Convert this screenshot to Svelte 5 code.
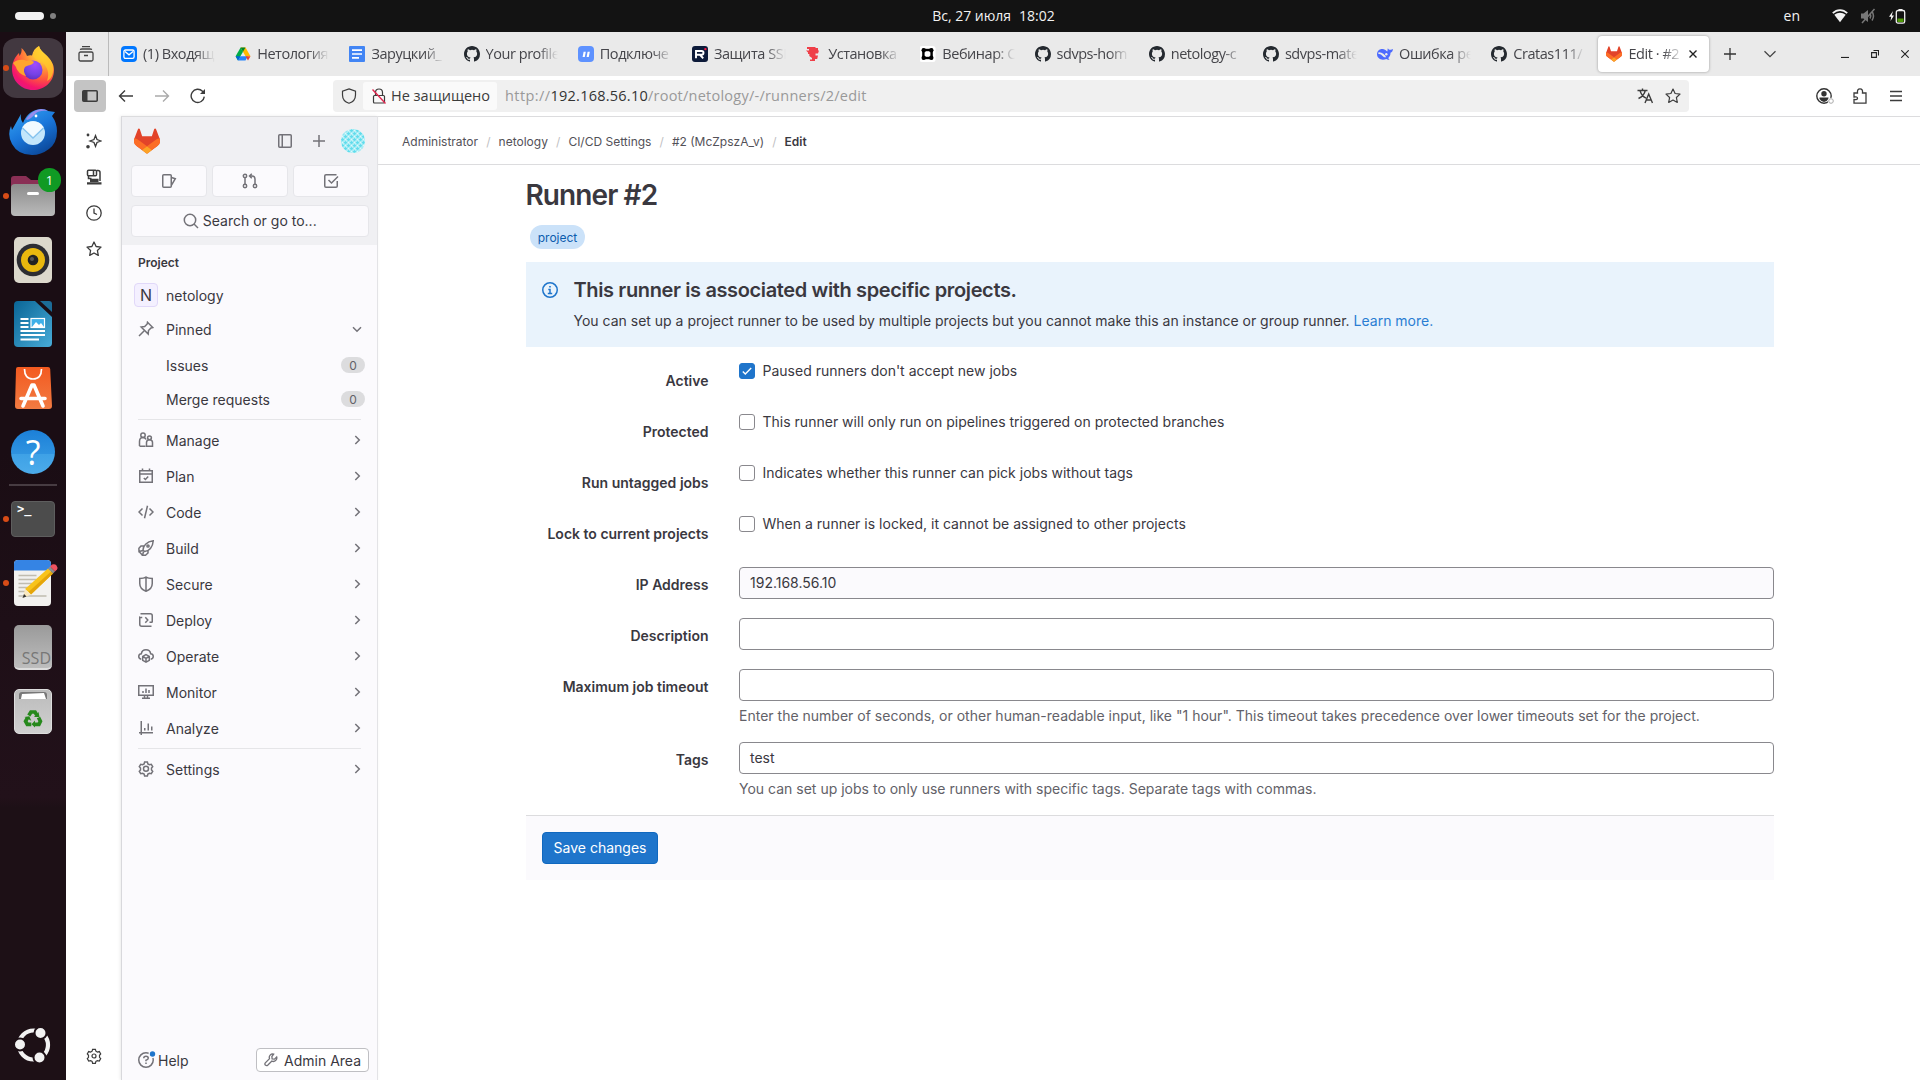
<script>
  const gh = '<path fill="#24292f" fill-rule="evenodd" d="M8 0C3.58 0 0 3.58 0 8c0 3.54 2.29 6.53 5.47 7.59.4.07.55-.17.55-.38 0-.19-.01-.82-.01-1.49-2.01.37-2.53-.49-2.69-.94-.09-.23-.48-.94-.82-1.13-.28-.15-.68-.52-.01-.53.63-.01 1.08.58 1.23.82.72 1.21 1.87.87 2.33.66.07-.52.28-.87.51-1.07-1.78-.2-3.64-.89-3.64-3.95 0-.87.31-1.59.82-2.15-.08-.2-.36-1.02.08-2.12 0 0 .67-.21 2.2.82a7.6 7.6 0 0 1 4 0c1.53-1.04 2.2-.82 2.2-.82.44 1.1.16 1.92.08 2.12.51.56.82 1.27.82 2.15 0 3.07-1.87 3.75-3.65 3.95.29.25.54.73.54 1.48 0 1.07-.01 1.93-.01 2.2 0 .21.15.46.55.38A8.01 8.01 0 0 0 16 8c0-4.42-3.58-8-8-8z"/>';
  const tanuki = '<path fill="#e24329" d="M15.73 6.35l-.02-.06L13.53.6a.57.57 0 0 0-1.08.04l-1.47 4.5H5.02L3.55.64A.57.57 0 0 0 2.47.6L.29 6.29l-.02.06a4.04 4.04 0 0 0 1.34 4.67L8 15.8l6.39-4.78a4.04 4.04 0 0 0 1.34-4.67z"/><path fill="#fc6d26" d="M15.73 6.35a7.3 7.3 0 0 0-2.92 1.31L8 11.3l3.06 2.31 3.33-2.5a4.04 4.04 0 0 0 1.34-4.76zM.27 6.35a7.3 7.3 0 0 1 2.92 1.31L8 11.3l-3.06 2.31-3.33-2.5A4.04 4.04 0 0 1 .27 6.35z"/><path fill="#fca326" d="M4.94 13.61L7.4 15.5a1 1 0 0 0 1.2 0l2.46-1.89L8 11.3z"/>';

  const tabs = [
    { t: '(1) Входящ', i: '<rect width="16" height="16" rx="4" fill="#07f"/><rect x="2.9" y="4" width="10.2" height="8.4" rx="1.6" fill="none" stroke="#fff" stroke-width="1.3"/><path d="M4 5.5l4 3.3 4-3.3" fill="none" stroke="#fff" stroke-width="1.3"/>' },
    { t: 'Нетология', i: '<path fill="#ffba00" d="M5.6 1.5h4.9l5 8.7h-5z"/><path fill="#00ac47" d="M5.6 1.5L8 5.8 3 14.5.6 10.2z"/><path fill="#2684fc" d="M5.4 10.2h7.4l-2.3 4.3H3z"/><path fill="#00832d" d="M5.6 1.5h4.9L8 5.8z"/><path fill="#0066da" d="M.6 10.2h4.8L3 14.5z"/><path fill="#ea4335" d="M10.6 10.2h4.9L13 14.5z"/>' },
    { t: 'Заруцкий_', i: '<rect width="16" height="16" rx="1" fill="#4285f4"/><path d="M3 4.2h10M3 8h10M3 11.8h7" stroke="#fff" stroke-width="1.7"/>' },
    { t: 'Your profile', i: gh },
    { t: 'Подключе', i: '<rect width="16" height="16" rx="4" fill="#5e92ff"/><path d="M4.6 11l1-5.2h2.2l-1 5.2zM8.6 11l1-5.2h2.2l-1 5.2z" fill="#fff"/>' },
    { t: 'Защита SSI', i: '<rect width="16" height="16" rx="3" fill="#0d1b3a"/><path d="M4 12.3V5h5.6q1.9 0 1.9 1.8 0 2-1.9 2H4M8.2 9l3 3.3" fill="none" stroke="#fff" stroke-width="1.9"/><circle cx="13.4" cy="3.1" r="1.2" fill="#ff1744"/>' },
    { t: 'Установка', i: '<path fill="#ef3f48" d="M1 1h8.5v1H12v2.5h1l-1 3H9.5v2H12l-.8 3.5H9V15H4v-1.500h2V12L3.300 10V8H2V6.500L0 4.500h3V3H1z"/>' },
    { t: 'Вебинар: С', i: '<rect x="-.5" y="0" width="16" height="16" rx="2.5" fill="#fff"/><rect x="3.4" y="4" width="8.2" height="8" fill="none" stroke="#000" stroke-width="2.4"/><g fill="#000"><circle cx="3.7" cy="4.3" r="2.2"/><circle cx="11.3" cy="4.3" r="2.2"/><circle cx="3.7" cy="11.7" r="2.2"/><circle cx="11.3" cy="11.7" r="2.2"/></g>' },
    { t: 'sdvps-hom', i: gh },
    { t: 'netology-c', i: gh },
    { t: 'sdvps-mate', i: gh },
    { t: 'Ошибка ре', i: '<path fill="#4d6bfe" d="M0 8.3C0 5 2.700 2.600 6 3.100c2.200.3 3 1.700 4.200 2.500.6-1.300.2-2.400.7-3.400.6 1.200 1.600 1.700 2.600 1.600.9-.1 1.600-.7 2.500-.9-.1 2-1.100 3.300-2.500 3.900.1 2-.8 3.900-2.400 5.400.5.500 1.100.6 1.400 1.200-1.300.6-2.300.1-3.100-.4C4.300 15.100 0 12.300 0 8.300z"/><path fill="#ebebeb" d="M1.500 6.200c3.300-.4 6.200 2 7.700 5-1.600.5-2.700-.3-3.600-1.300C4.300 8.300 3 7.600 1.300 8z"/><circle cx="9.3" cy="8.3" r="1.2" fill="#ebebeb"/>' },
    { t: 'Cratas111/', i: gh },
    { t: 'Edit · #2', i: tanuki, active: true }
  ];

  const chevR = '<path d="M6.3 4l4 4-4 4"/>';
  const nav = [
    { t: 'Manage', i: '<circle cx="5" cy="3.2" r="2.2"/><path d="M1.500 14V9.500C1.500 7 3 5.500 5 5.500c1.400 0 2.600.8 3.100 2M1.500 14.250H7.500"/><circle cx="11.5" cy="5.8" r="1.9"/><path d="M8.500 14.250V10.500c0-1.700 1.200-2.800 3-2.800s3 1.100 3 2.800v3.750z"/>' },
    { t: 'Plan', i: '<rect x="1.75" y="2.75" width="12.5" height="11.5"/><path d="M1.750 6h12.500M4.500 .5v2.500M11.500 .5v2.500M5.800 10l1.600 1.500 2.800-3"/>' },
    { t: 'Code', i: '<path d="M4.500 4.500L1 8l3.500 3.500M11.500 4.500L15 8l-3.500 3.500M9.500 1.800l-3 12.400"/>' },
    { t: 'Build', i: '<path d="M5 10c0-4 3.500-8.500 10.250-9.250C14.900 7 11 11.300 6.500 11.500zM5.800 6H3L.9 8.300 1 11.500l4-1M10 10.500V13l-2.500 2.250H4.500l1-3.500M1 11.500l3.500 3.700"/><circle cx="10" cy="6" r="1.1"/>' },
    { t: 'Secure', i: '<path d="M1.750 2.500C4 2.500 6.500 2 8 1c1.500 1 4 1.500 6.250 1.500V7.500c0 3.500-3 6.500-6.250 7.750C4.750 14 1.750 11 1.750 7.500zM8 1v14"/>' },
    { t: 'Deploy', i: '<path d="M2.500 1.750h9.750a2 2 0 0 1 2 2V10.500M14.250 10.250H11.500M1 5h.75M13.500 14.250H3.750a2 2 0 0 1-2-2V5.500h2.500M7.300 5.300L9.800 8l-2.500 2.700"/>' },
    { t: 'Operate', i: '<path d="M3.300 11.250C1.700 11 .75 9.900.75 8.500c0-1.500 1.100-2.700 2.600-2.750C3.700 3.200 5.500 1.750 8 1.750s4.300 1.450 4.650 4c1.500.05 2.600 1.250 2.600 2.750 0 1.400-.95 2.500-2.550 2.750"/><path d="M8 6.600l3.300 1.800v3.900L8 14.200l-3.300-1.900V8.400zM4.800 8.500L8 10.300l3.200-1.800M8 10.300v3.700"/>' },
    { t: 'Monitor', i: '<rect x=".75" y="1.75" width="14.5" height="9.5"/><path d="M6.500 11.250v3M9.500 11.250v3M4 14.250h8M5 7v2M8 4.500V9M11 6v3"/>' },
    { t: 'Analyze', i: '<path d="M3.250 1v14M1 12.750h14M6.750 8v2.500M10.250 3.500v7M13.750 6.500v4"/>' }
  ];
  const gear = '<path d="M6.600 1h2.800l.5 1.900 1.500.85 1.900-.5 1.400 2.400-1.200 1.300v2.100l1.200 1.300-1.400 2.400-1.900-.5-1.500.85-.5 1.900H6.600l-.5-1.900-1.500-.85-1.900.5-1.400-2.400 1.200-1.300V6.950L1.300 5.650l1.400-2.400 1.900.5 1.500-.85z"/>';

  const crumbs = ['Administrator', 'netology', 'CI/CD Settings', '#2 (McZpszA_v)'];
  const checks = [
    { l: 'Active', t: "Paused runners don't accept new jobs", on: true },
    { l: 'Protected', t: 'This runner will only run on pipelines triggered on protected branches' },
    { l: 'Run untagged jobs', t: 'Indicates whether this runner can pick jobs without tags' },
    { l: 'Lock to current projects', t: 'When a runner is locked, it cannot be assigned to other projects' }
  ];
  const fields = [
    { l: 'IP Address', v: '192.168.56.10', ro: true },
    { l: 'Description', v: '' },
    { l: 'Maximum job timeout', v: '', h: 'Enter the number of seconds, or other human-readable input, like "1 hour". This timeout takes precedence over lower timeouts set for the project.' },
    { l: 'Tags', v: 'test', h: 'You can set up jobs to only use runners with specific tags. Separate tags with commas.' }
  ];

  // identicon-like lattice inside the user's avatar
  const dots = [];
  for (let y = 0; y < 8; y++) for (let x = 0; x < 8; x++) dots.push([x * 3 + 1.5, y * 3 + 1.5, (x + y) % 2]);
</script>

{#snippet icon(body, size = 16, cls = '', sw = 1.5)}
  <svg class={cls} width={size} height={size} viewBox="0 0 16 16" fill="none" stroke="currentColor" stroke-width={sw}>{@html body}</svg>
{/snippet}
{#snippet pic(body, size = 16)}
  <svg width={size} height={size} viewBox="0 0 16 16">{@html body}</svg>
{/snippet}

<div class="screen">
  <header class="topbar">
    <div class="ws"><i class="pill"></i><i class="dot"></i></div>
    <div class="clock"><span>Вс, 27 июля</span><span>18:02</span></div>
    <div class="tray">
      <span>en</span>
      <svg width="16" height="16" viewBox="0 0 16 16"><path d="M.8 5.200C5 1 11 1 15.200 5.200" fill="none" stroke="#f2f2f2" stroke-width="1.800"/><path d="M2.300 6.700c3.400-2.700 8-2.700 11.400 0L8 14.200z" fill="#f2f2f2"/></svg>
      <svg width="16" height="16" viewBox="0 0 16 16" fill="none" stroke="#777" stroke-width="1.500"><path d="M1 5.500h2.500L8 2v12l-4.500-3.500H1z" fill="#777" stroke="none"/><path d="M10 5.500q1.500 2.500 0 5M12 3.500q3 4.500 0 9M14.500 1L2 15"/></svg>
      <svg width="18" height="16" viewBox="0 0 18 16"><path d="M5 3L1 8.700h2.200L2.500 13 6 7.500H3.800z" fill="#f2f2f2"/><rect x="8.300" y="2.500" width="8.400" height="12.600" rx="1.700" fill="none" stroke="#f2f2f2" stroke-width="1.300"/><path d="M10.500 1h4v1.500h-4z" fill="#f2f2f2"/><path d="M9.500 10.500h6v3.500h-6z" fill="#4e9a06"/></svg>
    </div>
  </header>

  <div class="desk">
    <nav class="dock">
      <div class="app sel run"><svg width="44" height="44" viewBox="0 0 44 44">
        <defs>
          <radialGradient id="ff" cx=".75" cy=".12" r="1"><stop offset="0" stop-color="#fff44f"/><stop offset=".35" stop-color="#ffa436"/><stop offset=".62" stop-color="#ff5a3c"/><stop offset=".85" stop-color="#f5156c"/><stop offset="1" stop-color="#e31587"/></radialGradient>
          <radialGradient id="fg" cx=".6" cy=".2" r=".9"><stop offset="0" stop-color="#a04bff"/><stop offset=".6" stop-color="#7542e5"/><stop offset="1" stop-color="#5b2bb8"/></radialGradient>
        </defs>
        <path fill="url(#ff)" d="M28 0c1 4 4 6 7 9 5 5 8 9 8 15 0 12-9.500 20-21 20S1 35 1 23C1 16 4 11 8 7l.5 3C10 8 11 5 10.500 2 13 4 15 7 16 10q3-1 5-.5C22 5 24 2 28 0z"/>
        <path fill="#ffc928" d="M28 0c1 4 4 6 7 9 5 5 8 9 7 17-1 6-4 8-6 9 3-8 0-14-4-18-4-3-9-4-10-7C22 6 24 3 28 0z" opacity=".75"/>
        <circle cx="22" cy="24" r="9.500" fill="url(#fg)"/>
        <path fill="#ffa52e" d="M2 17c4-4 10-4 14-2 3-1 6 0 7 1-2 4-7 3-9 5-2 3-1 6 1 9-5-1-9-5-10-9z"/></svg></div>
      <div class="app"><svg width="48" height="48" viewBox="0 0 48 48">
        <defs><linearGradient id="tb" x1="0" y1="0" x2=".6" y2="1"><stop offset="0" stop-color="#39a9f5"/><stop offset=".55" stop-color="#1a77db"/><stop offset="1" stop-color="#0c4b9e"/></linearGradient></defs>
        <path fill="url(#tb)" d="M12 6q-1 6 2 9Q19 2 32 1q5 0 7 2l7 1-3 4q5 7 5 15 0 12-8 18-8 6-17 6Q9 47 3 36-2 27 2 18l1 4Q7 15 12 6z"/>
        <path fill="#b08cf0" d="M17 11Q23 2 32 1q4 0 7 2-9-1-13 3-4 5-8 6z" opacity=".8"/>
        <circle cx="24" cy="25" r="12" fill="#c3e6fb"/><path d="M13.500 19.500L24 29.500 34.500 19.500a12 12 0 0 0-21 0z" fill="#f1faff"/><path d="M13.500 20L24 30l10.500-10" fill="none" stroke="#86c3ee" stroke-width="1.300"/><circle cx="27" cy="8" r="1.400" fill="#fff"/></svg></div>
      <div class="app run"><svg width="48" height="44" viewBox="0 0 48 44"><path fill="#8a2f55" d="M2 5q0-3 3-3h12l5 4h18q4 0 4 4v6H2z"/><defs><linearGradient id="gr" x1="0" y1="0" x2="0" y2="1"><stop offset="0" stop-color="#8c8c8c"/><stop offset="1" stop-color="#bababa"/></linearGradient></defs><rect x="2" y="10" width="44" height="32" rx="4" fill="url(#gr)"/><rect x="18" y="18" width="12" height="3" rx="1.500" fill="#fff"/></svg><b class="badge">1</b></div>
      <div class="app"><svg width="38" height="46" viewBox="0 0 38 46"><rect width="38" height="46" rx="5" fill="#dcd8cc"/><circle cx="19" cy="23" r="16.300" fill="#2d2d33"/><circle cx="19" cy="23" r="12" fill="#e9b80e"/><circle cx="19" cy="23" r="5.300" fill="#222"/><circle cx="18" cy="22" r="2" fill="#555"/></svg></div>
      <div class="app"><svg width="38" height="46" viewBox="0 0 38 46"><defs><linearGradient id="wr" x1="0" y1="0" x2="1" y2="1"><stop offset="0" stop-color="#0a6596"/><stop offset="1" stop-color="#48acd8"/></linearGradient></defs><path fill="url(#wr)" d="M4 0h17l17 16v26q0 4-4 4H4q-4 0-4-4V4q0-4 4-4z"/><path fill="#1c6c97" d="M26 0h9q3 0 3 3v8z"/><g stroke="#fff" stroke-width="2"><path d="M6.500 18h8M6.500 22h8M6.500 26h8M6.500 30H31M6.500 34H31M6.500 38.500H25"/></g><rect x="17" y="17.500" width="13.500" height="9" fill="#3fb0e8" stroke="#fff" stroke-width="1.200"/><path fill="#fff" d="M18 26l4-5 3 3 2-2 3 4z"/></svg></div>
      <div class="app"><svg width="38" height="44" viewBox="0 0 38 44"><defs><linearGradient id="as" x1="0" y1="0" x2="0" y2="1"><stop offset="0" stop-color="#f35a20"/><stop offset="1" stop-color="#f27b42"/></linearGradient></defs><path fill="url(#as)" d="M4 1h30q2 0 2.200 2L38 40q0 3-3 3H4q-3 0-3-3L2 3q0-2 2-2z"/><path d="M10.500 3q0 10 8.500 10t8.500-10" fill="none" stroke="#fff" stroke-width="1.700"/><path d="M9 40L18 19h2l9 21M7 32.500h24" fill="none" stroke="#fff" stroke-width="3.600" stroke-linecap="round" stroke-linejoin="round"/></svg></div>
      <div class="app"><div class="help">?</div></div>
      <hr />
      <div class="app run"><div class="term">&gt;_</div></div>
      <div class="app run"><svg width="46" height="46" viewBox="0 0 46 46" class="wide"><rect x="0" width="37" height="46" rx="4" fill="#f2f1ef"/><path fill="#3584e4" d="M4 0h29q4 0 4 4v6.500H0V4q0-4 4-4z"/><path d="M4.500 15.500h18M4.500 19.500h18M4.500 23.500H18M4.500 27.500H14M4.500 31.500h8M4.500 36h28" stroke="#c0bcb0" stroke-width="1.600"/><path fill="#f8c31c" d="M34 8.500l5 5L17 34.500l-6-5.500z"/><path fill="#e5a50a" d="M37 11.500l2 2L17 34.500 14.500 32z"/><path fill="#f9e8c0" d="M11 29l6 5.500-8 3.500z"/><path fill="#333" d="M10 34l2.500 2.500L8.500 38z"/><path fill="#8d8d8d" d="M34 8.500l2-2 5 5-2 2z"/><path fill="#ee5360" d="M36 6.500l2-2q3-1 4.500 1t.5 4l-2 2z"/></svg></div>
      <div class="app"><div class="ssd">SSD</div></div>
      <div class="app"><div class="trash"><svg width="30" height="8" viewBox="0 0 30 8"><path d="M1 7V3q0-3 3-3h22q3 0 3 3v4" fill="#777"/><path d="M3 7l1-5 22-1 2 6z" fill="#fff"/></svg><svg class="rec" width="20" height="19" viewBox="0 0 20 19"><g fill="none" stroke="#26891c" stroke-width="3.700"><path d="M5.800 6.500L8 3h4l1.800 3.200M15.500 8.500l1.900 3.700-1.500 3.100h-4M8.300 15.300h-4L2.600 12.200l2-3.500"/></g><path fill="#26891c" d="M11 8l5.500 0-1-5zM12 11.500v7l-3.500-3.300zM1.500 8l4.800-.8 2 4.500z"/></svg></div></div>
      <div class="grow"></div>
      <svg class="ubuntu" width="38" height="38" viewBox="0 0 38 38"><circle cx="19.500" cy="19" r="14.500" fill="none" stroke="#f2f2f2" stroke-width="4.200"/><g fill="#f2f2f2" stroke="#1d1016" stroke-width="2"><circle cx="6" cy="18.500" r="6"/><circle cx="26.500" cy="7" r="6"/><circle cx="25.500" cy="31.500" r="6"/></g></svg>
    </nav>

    <section class="browser">
      <div class="tabstrip">
        <div class="fxview">{@render icon('<rect x="1" y="6" width="14" height="9" rx="1.5"/><path d="M2 3.500Q3 3 4 3h8q1 0 2 .5M4 .7h8M6 9.500h4"/>', 16, '', 1.3)}</div>
        <div class="tabs">
          {#each tabs as tab}
            <div class="tab" class:active={tab.active}>
              {@render pic(tab.i)}
              <span class="tt">{tab.t}</span>
              {#if tab.active}<svg width="8" height="8" viewBox="0 0 8 8"><path d="M.5.5l7 7M7.500.5l-7 7" stroke="#222" stroke-width="1.400"/></svg>{/if}
            </div>
          {/each}
        </div>
        <svg class="newtab" width="12" height="12" viewBox="0 0 12 12"><path d="M6 0v12M0 6h12" stroke="#333" stroke-width="1.300"/></svg>
        <svg class="alltabs" width="12" height="8" viewBox="0 0 12 8"><path d="M.5 1.200L6 6.700l5.500-5.500" fill="none" stroke="#444" stroke-width="1.300"/></svg>
        <div class="grow"></div>
        <div class="wm">
          <svg width="8" height="8" viewBox="0 0 8 8"><path d="M0 7.500h8" stroke="#222" stroke-width="1.200"/></svg>
          <svg width="8" height="8" viewBox="0 0 8 8"><path d="M.6 2.600h4.800v4.800H.6zM2.500.5h5v5" fill="none" stroke="#222" stroke-width="1.100"/></svg>
          <svg width="8" height="8" viewBox="0 0 8 8"><path d="M.3.300l7.400 7.400M7.700.3L.3 7.700" stroke="#222" stroke-width="1.100"/></svg>
        </div>
      </div>

      <div class="toolbar">
        <div class="sb">{@render icon('<rect x=".8" y="2.8" width="14.4" height="10.4" rx="1"/><path fill="currentColor" stroke="none" d="M1 3h4.500v10H1z"/>', 16, '', 1.6)}</div>
        <div class="navi">
          {@render icon('<path d="M15 8H1.500M7 2.500L1.500 8 7 13.500"/>', 16, '', 1.4)}
          {@render icon('<path d="M1 8h13.500M9 2.500L14.500 8 9 13.500"/>', 16, 'dis', 1.4)}
          {@render icon('<path d="M14.300 8.700A6.600 6.600 0 1 1 12.500 3.300L14 5"/><path d="M15 1v5h-5z" fill="currentColor" stroke="none"/>', 16, '', 1.4)}
        </div>
        <div class="urlbar">
          <div class="shield">{@render icon('<path d="M8 .9l6.500 2.300V7c0 4-2.500 7-6.500 8.300C4 14 1.500 11 1.500 7V3.200z"/>', 16, '', 1.2)}</div>
          <div class="insecure">
            {@render icon('<rect x="2.5" y="7.5" width="11" height="7.5" rx="1"/><path d="M4.500 7.500V4.500a3.500 3.500 0 0 1 7 0v3"/><path d="M1.500 1.500l13 14" stroke="#e22850" stroke-width="1.4"/>', 16, '', 1.2)}
            <span>Не защищено</span>
          </div>
          <div class="url"><span class="u1">http://</span><span class="u2">192.168.56.10</span><span class="u3">/root/netology/-/runners/2/edit</span></div>
          <div class="uricons">
            {@render icon('<path d="M.5 2.500h10M5.500.5v2M3 2.500Q4.500 8 9 10.200M8.300 2.500Q7 8 1.500 10.500M8 15l3.700-9L15.500 15M9.300 12h5"/>', 16, '', 1.4)}
            {@render icon('<path d="M8 1l2.100 4.500 4.900.6-3.600 3.400.9 4.900L8 12l-4.300 2.400.9-4.900L1 6.100l4.900-.6z" stroke-linejoin="round"/>', 16, '', 1.2)}
          </div>
        </div>
        <div class="grow"></div>
        <div class="tools">
          <svg class="acct" width="18" height="17" viewBox="0 0 18 17"><circle cx="8" cy="8" r="7.200" fill="none" stroke="#333" stroke-width="1.400"/><circle cx="8" cy="5.800" r="2.700" fill="#333"/><path d="M3.500 9.500h9V11q-2 3-4.500 3T3.500 11z" fill="#333"/><circle cx="15" cy="13" r="3.300" fill="#fff"/><circle cx="15" cy="13" r="2.300" fill="#fff" stroke="#aaa" stroke-width="1"/></svg>
          {@render icon('<path d="M2 15.200V11.500q3.500.5 3.500-1.300T2 9V5h3.500Q5 .8 8 .8T10.500 5H14v10.200z"/>', 16, '', 1.3)}
          {@render icon('<path d="M2 3.500h12M2 8h12M2 12.500h12"/>', 16, '', 1.3)}
        </div>
      </div>

      <div class="viewport">
        <aside class="fxside">
          {@render icon('<path d="M9.500 2.500l1.500 4 4 1.500-4 1.500-1.500 4L8 9.500 4 8l4-1.500z"/><circle cx="2" cy="2" r="1.4" fill="currentColor" stroke="none"/><circle cx="2" cy="13.7" r="1.8" fill="currentColor" stroke="none"/>', 16, '', 1.3)}
          {@render icon('<rect x="1.500" y="1.2" width="9" height="5.600" rx="1"/><path d="M7.500 1.500v5M11 1.500h1q2 0 2 2v8.500M2.500 7v2.500h3M4 10.500h8.500"/><path d="M1 14.400h14.500M4 11.800h8.500" stroke-width="2.200"/>', 16, '', 1.5)}
          {@render icon('<circle cx="8" cy="8" r="7.2"/><path d="M8 3.500V8l3 1.500"/>', 16, '', 1.3)}
          {@render icon('<path d="M8 1l2.100 4.500 4.900.6-3.600 3.400.9 4.900L8 12l-4.300 2.400.9-4.900L1 6.100l4.900-.6z" stroke-linejoin="round"/>', 16, '', 1.3)}
          <div class="grow"></div>
          {@render icon('<g transform="translate(0 .300)">' + gear + '<circle cx="8" cy="7.700" r="2"/></g>', 16, '', 1.2)}
        </aside>

        <aside class="gl">
          <div class="glhead">
            <div class="brand">
              {@render pic(tanuki, 26)}
              <div class="grow"></div>
              {@render icon('<rect x="1.75" y="1.75" width="12.5" height="12.5" rx="1"/><path d="M5.250 2v12"/>')}
              {@render icon('<path d="M8 2v12M2 8h12"/>')}
              <svg class="ava" width="24" height="24" viewBox="0 0 24 24"><rect width="24" height="24" fill="#dff8fb"/>{#each dots as [x, y, k]}{#if k}<circle cx={x} cy={y} r="1.500" fill="#5fdcec" />{:else}<rect x={x - 0.9} y={y - 0.9} width="1.800" height="1.800" fill="none" stroke="#8be6f1" stroke-width=".6" />{/if}{/each}</svg>
            </div>
            <div class="trio">
              <div class="tile">{@render icon('<rect x="1.75" y="1.75" width="8.5" height="12.5" rx="1"/><path d="M10.500 4.500l3.800 1.200-3.800 6.500"/>')}</div>
              <div class="tile">{@render icon('<circle cx="3" cy="2.9" r="1.7"/><circle cx="3" cy="13" r="1.7"/><circle cx="13" cy="13" r="1.7"/><path d="M3 4.800v6.400M13 11.200V6q0-3-3-3H7.500M9.800.7L7.500 3l2.300 2.300"/>')}</div>
              <div class="tile">{@render icon('<path d="M13.500 1.750H3q-1.250 0-1.250 1.250v10q0 1.250 1.250 1.250h10q1.250 0 1.250-1.250V8M5.500 7l3 3L15 3.500"/>')}</div>
            </div>
            <div class="tile search">{@render icon('<circle cx="7" cy="7" r="5.7"/><path d="M11 11l4 4"/>')}<span>Search or go to...</span></div>
          </div>
          <div class="glnav">
            <div class="cap"><span>Project</span></div>
            <div class="row ctx"><div class="n">N</div><span>netology</span></div>
            <div class="row">{@render icon('<path d="M9.500 1.200l5.300 5.300-1.800.5-2.500 2.500-.3 3.500-7-7L6.700 5.500 9.200 3zM6 10L1 15"/>')}<span class="txt">Pinned</span>{@render icon('<path d="M4 6.300l4 4 4-4"/>')}</div>
            <div class="row sub first"><span class="txt">Issues</span><span class="cnt">0</span></div>
            <div class="row sub"><span class="txt">Merge requests</span><span class="cnt">0</span></div>
            <hr class="upper" />
            {#each nav as n}
              <div class="row big">{@render icon(n.i)}<span class="txt">{n.t}</span>{@render icon(chevR)}</div>
            {/each}
            <hr />
            <div class="row big">{@render icon(gear + '<circle cx="8" cy="7.7" r="2.5"/>')}<span class="txt">Settings</span>{@render icon(chevR)}</div>
          </div>
          <div class="glfoot">
            {@render icon('<circle cx="8" cy="8" r="7.25"/><path d="M5.750 6.300q0-2 2.250-2t2.250 1.900Q10.250 7.500 8 8.300V9.300M8 10.500V12"/><circle cx="14.500" cy="2" r="4" fill="#fbfafd" stroke="none"/><circle cx="14.500" cy="2" r="2.700" fill="#1f75cb" stroke="none"/>', 16, 'notify')}
            <span>Help</span>
            <div class="grow"></div>
            <div class="admin">{@render icon('<path d="M11 1.200a4 4 0 0 0-4.700 5.300L1.500 11.300q-1 1.200 0 2.500 1.500 1.200 2.700.2l4.800-4.700a4 4 0 0 0 5.500-4.800L12 7 9.300 6.700 9 4z"/>', 14)}<span>Admin Area</span></div>
          </div>
        </aside>

        <main>
          <div class="crumbs">
            {#each crumbs as c}<span>{c}</span><span class="sl">/</span>{/each}<span class="cur">Edit</span>
          </div>
          <div class="content">
            <h1>Runner #2</h1>
            <span class="pb">project</span>
            <div class="alert">
              {@render icon('<circle cx="8" cy="8" r="7.25"/><path d="M6.300 7.500H8v3.750M5.800 11.500h4.400M7.200 4.750h1.600"/>')}
              <div>
                <h2>This runner is associated with specific projects.</h2>
                <p>You can set up a project runner to be used by multiple projects but you cannot make this an instance or group runner. <a href="#learn">Learn more.</a></p>
              </div>
            </div>
            {#each checks as c}
              <div class="fr">
                <div class="lb">{c.l}</div>
                <div class="ck"><i class:on={c.on}>{#if c.on}<svg width="10" height="10" viewBox="0 0 10 10"><path d="M.8 5.500L3.300 8 9.200 2" fill="none" stroke="#fff" stroke-width="1.400"/></svg>{/if}</i><span>{c.t}</span></div>
              </div>
            {/each}
            {#each fields as f}
              <div class="fr">
                <div class="lb">{f.l}</div>
                <div class="fc">
                  <div class="inp" class:ro={f.ro}><span>{f.v}</span></div>
                  {#if f.h}<span class="hint">{f.h}</span>{/if}
                </div>
              </div>
            {/each}
            <div class="actions"><button>Save changes</button></div>
          </div>
        </main>
      </div>
    </section>
  </div>
</div>

<style>
  :global(body) { margin: 0; overflow: hidden; }
  * { box-sizing: border-box; }
  svg { display: block; flex: none; }
  .notify { overflow: visible; }
  i { font-style: normal; }
  .grow { flex: 1; }
  .screen { width: 1920px; height: 1080px; display: flex; flex-direction: column; background: #fff; font-family: "Open Sans", "Noto Sans", sans-serif; }

  .topbar { height: 32px; background: #131313; color: #f2f2f2; display: grid; grid-template-columns: 1fr auto 1fr; align-items: center; font-size: 14px; }
  .ws { display: flex; align-items: center; gap: 6px; padding-left: 15px; }
  .pill { width: 29px; height: 8px; border-radius: 4px; background: #f2f2f2; }
  .dot { width: 6px; height: 6px; border-radius: 50%; background: #808080; }
  .clock { display: flex; gap: 8px; padding: 0 0 2px 67px; }
  .tray { display: flex; justify-content: flex-end; align-items: center; gap: 12px; padding-right: 14px; }
  .tray span { margin-right: 20px; padding-bottom: 2px; }

  .desk { flex: 1; display: flex; min-height: 0; }
  .dock { width: 66px; padding-top: 4px; display: flex; flex-direction: column; align-items: center; background: linear-gradient(#1a0d14 0, #1a0d14 40%, #22111a 73%, #1d1016 74%, #1d1016 100%); }
  .dock hr { width: 48px; height: 2px; margin: 0 0 1px; border: 0; background: #473c42; }
  .app { position: relative; width: 60px; height: 64px; display: flex; align-items: center; justify-content: center; }
  .sel { background: #423840; background-clip: content-box; padding: 2px 0; border-radius: 14px; }
  .run::before { content: ''; position: absolute; left: 0; top: 29px; width: 6px; height: 6px; border-radius: 50%; background: #d84c17; }
  .badge { position: absolute; left: 35px; top: 4px; width: 23px; height: 24px; border-radius: 12px; background: #109a24; color: #fff; font-size: 13px; line-height: 24px; text-align: center; font-weight: 400; }
  .help { width: 44px; height: 44px; border-radius: 50%; background: linear-gradient(#1c80d8, #2f93e0 54%, #3ea1e6 55%, #4cabea); color: #fff; font: 34px/44px "Open Sans", sans-serif; text-align: center; }
  .term { width: 44px; height: 36px; border-radius: 4px; background: #4c4c4c; border: 1px solid #5e5e5e; color: #fff; font: bold 12px/15px "DejaVu Sans Mono", monospace; padding-left: 5px; }
  .wide { margin-left: 8px; }
  .ssd { width: 38px; height: 45px; border-radius: 5px; background: linear-gradient(#9a9a9a, #bdbdbd); border-bottom: 2px solid #ddd; color: #777; font-size: 16px; line-height: 67px; text-align: right; padding-right: 1px; overflow: hidden; }
  .trash { width: 38px; height: 45px; border-radius: 5px; background: linear-gradient(#bbb, #d0d0d0); border: 1px solid #ddd; display: flex; flex-direction: column; align-items: center; gap: 9px; padding-top: 2px; }
  .ubuntu { margin-bottom: 16px; }

  .browser { flex: 1; display: flex; flex-direction: column; min-width: 0; }
  .tabstrip { height: 44px; background: #eaeaea; display: flex; align-items: center; }
  .fxview { width: 43px; height: 44px; display: flex; align-items: center; padding-left: 12px; border-right: 1px solid #bbb; color: #444; }
  .tabs { display: flex; gap: 4px; padding-left: 4px; }
  .tab { width: 110.2px; height: 36px; display: flex; align-items: center; gap: 6px; padding: 0 8px; border-radius: 4px; color: #45454a; }
  .tt { flex: 1; overflow: hidden; white-space: nowrap; font-size: 14.5px; letter-spacing: -.45px; line-height: 22px; padding-bottom: 1px; mask-image: linear-gradient(90deg, #000 calc(100% - 20px), transparent); }
  .tab.active { background: #fff; box-shadow: 0 0 3px rgba(0, 0, 0, .35); margin-left: 1px; }
  .tab.active svg:last-child { margin-right: 4px; }
  .newtab { margin-left: 15px; }
  .alltabs { margin-left: 28px; }
  .wm { display: flex; gap: 22px; padding-right: 11px; }

  .toolbar { height: 40px; background: #fff; display: flex; align-items: center; padding-left: 8px; color: #3c3c3c; }
  .sb { width: 32px; height: 32px; border-radius: 4px; background: #c4c4c4; display: flex; align-items: center; justify-content: center; }
  .navi { display: flex; gap: 20px; padding-left: 12px; width: 227px; }
  .toolbar :global(.dis) { color: #aaa; }
  .urlbar { width: 1356px; height: 32px; border-radius: 4px; background: #f0f0f0; display: flex; align-items: center; font-size: 14.5px; }
  .shield { padding-left: 8px; width: 30px; }
  .insecure { height: 28px; width: 134px; display: flex; align-items: center; gap: 4px; padding-left: 8px; background: #fafafa; border-radius: 3px; white-space: nowrap; }
  .insecure span { padding-bottom: 2px; }
  .url { flex: 1; padding: 0 0 2px 8px; color: #999; white-space: nowrap; letter-spacing: .24px; }
  .u1 { letter-spacing: .42px; }
  .u2 { color: #333; }
  .uricons { display: flex; gap: 12px; padding-right: 8px; }
  .tools { display: flex; gap: 20px; padding-right: 16px; }
  .acct { margin-right: -2px; }

  .viewport { flex: 1; display: flex; min-height: 0; }
  .fxside { width: 55px; display: flex; flex-direction: column; align-items: center; gap: 20px; padding: 17px 0 16px 1px; color: #3c3c3c; }

  .gl, main { font-family: Inter, sans-serif; font-size: 14px; color: #3a383f; border-top: 1px solid #dcdcde; }
  .gl { width: 257px; display: flex; flex-direction: column; background: #fbfafd; border-left: 1px solid #d8d8dc; border-right: 1px solid #e3e3e6; box-shadow: -1px 0 3px rgba(0, 0, 0, .08); line-height: 20px; }
  .gl svg { color: #737278; }
  .glhead { height: 128px; background: #f0f0f3; padding: 12px 8px 8px 8.5px; display: flex; flex-direction: column; }
  .brand { height: 24px; display: flex; align-items: center; gap: 18px; padding: 0 4px 0 3px; }
  .brand :global(svg:last-child) { margin-left: -4px; }
  .ava { border-radius: 50%; }
  .trio { display: flex; gap: 5px; margin-top: 12px; }
  .tile { flex: 1; height: 32px; display: flex; align-items: center; justify-content: center; gap: 4px; background: #fbfafd; border: 1px solid #e6e6ea; border-radius: 4px; }
  .search { flex: none; margin-top: 8px; }
  .glnav { flex: 1; padding: 8px 8px 0; }
  .cap { padding: 0 8px; margin-bottom: 5px; font-size: 12px; font-weight: 600; line-height: 20px; }
  .row { display: flex; align-items: center; height: 34px; padding: 0 4px 0 8px; }
  .row .txt { flex: 1; padding: 2px 0 0 12px; }
  .ctx { padding: 0 4px; gap: 8px; }
  .ctx span { padding-top: 1px; }
  .n { width: 24px; height: 24px; border-radius: 4px; background: #f4f0ff; border: 1px solid #e1d8f9; font-size: 16px; line-height: 22px; text-align: center; }
  .sub { padding: 0 4px 0 24px; }
  .first { margin-top: 2px; }
  .cnt { width: 24px; height: 16px; border-radius: 8px; background: #dcdcde; font-size: 12px; line-height: 17px; text-align: center; color: #626168; }
  .big { height: 36px; }
  .glnav hr { height: 1px; border: 0; margin: 2px 8px; background: #e5e5e8; }
  .glnav .upper { margin-top: 3px; }
  .glfoot { display: flex; align-items: center; height: 40px; padding: 0 8px 0 16px; gap: 4px; }
  .glfoot span { padding-top: 2px; }
  .admin { display: flex; align-items: center; gap: 6px; height: 24px; padding: 0 7px; background: #fff; border: 1px solid #bfbfc3; border-radius: 4px; }

  main { flex: 1; min-width: 0; line-height: 20px; }
  .crumbs { height: 48px; display: flex; align-items: center; padding: 2px 0 0 24px; font-size: 12px; border-bottom: 1px solid #dcdcde; color: #535158; }
  .sl { width: 20.5px; text-align: center; color: #bfbfc3; }
  .cur { font-weight: 600; color: #3a383f; }
  .content { width: 1248px; margin-left: 148px; padding-top: 16px; }
  h1 { margin: 0 0 0 -.5px; font-size: 28px; line-height: 28px; font-weight: 600; letter-spacing: -.9px; }
  .pb { display: block; width: 55px; height: 24px; margin: 16px 0 13px 4px; border-radius: 12px; background: #cbe2f9; color: #0b5cad; font-size: 12px; line-height: 26px; text-align: center; }
  .alert { height: 85px; margin-bottom: 16px; padding: 16px; display: flex; gap: 15.5px; background: #e9f3fc; }
  .alert > :global(svg) { color: #1f75cb; margin-top: 4px; }
  h2 { margin: 0 0 9px; font-size: 20px; line-height: 24px; font-weight: 600; letter-spacing: -.37px; }
  p { margin: 0; white-space: nowrap; }
  a { color: #2a7dd3; text-decoration: none; }
  .fr { display: grid; grid-template-columns: 182.5px 1035px; column-gap: 30.5px; min-height: 35px; margin-bottom: 16px; }
  .lb { padding-top: 8px; text-align: right; font-weight: 600; }
  .ck { display: flex; gap: 7.5px; height: 16px; align-items: center; letter-spacing: .01px; }
  .ck i { width: 16px; height: 16px; border: 1px solid #89888d; border-radius: 3px; background: #fff; }
  .ck i.on { background: #1f75cb; border-color: #1f75cb; padding: 2px; }
  .inp { height: 32px; border: 1px solid #89888d; border-radius: 4px; padding: 5px 10px; }
  .ro { background: #fbfafd; }
  .hint { display: block; margin-top: 5px; color: #626168; white-space: nowrap; letter-spacing: .007px; }
  .actions { height: 65px; border-top: 1px solid #dcdcde; background: #fbfafd; padding: 16px; }
  button { height: 32px; width: 116px; padding: 0; border: 1px solid #1068bf; border-radius: 4px; background: #1f75cb; color: #fff; font: 14px/20px Inter, sans-serif; }
</style>
